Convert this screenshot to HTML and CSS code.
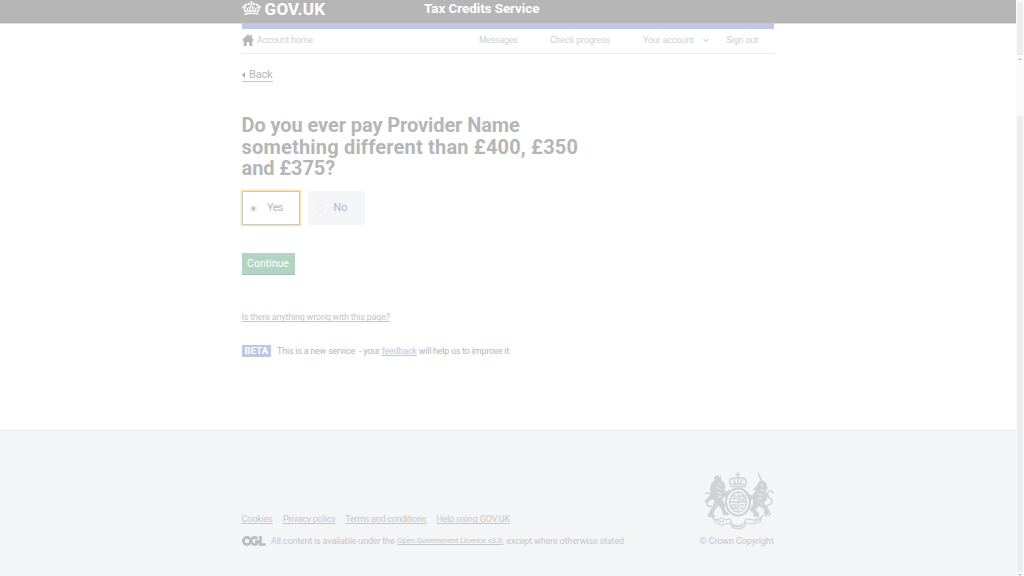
FILE: index.html
```
<!DOCTYPE html>
<html lang="en">
<head>
<meta charset="utf-8">
<title>Tax Credits Service</title>
<link rel="stylesheet" href="styles.css">
</head>
<body>
<div class="viewport">
<div class="page">
<header class="top"><div class="wrap top-in">
<svg class="crown" viewBox="0 0 20 16" fill="none" stroke="#fff"><path d="M2.6 14.1Q10 12 17.4 14.1M3.4 12 1.7 6.8M16.6 12l1.7-5.2M4 11.3Q10 9.6 16 11.3" stroke-width="1.5"/><path d="M2 7.5q2.5-2 3.4 1.1Q7.7 5 9 8.6V5.5h2v3.1q1.3-3.6 3.6 0Q15.5 5.5 18 7.5M6 11 5.3 8.5M8 10.5 7.7 8M12 10.5l.3-2.5M14 11l.7-2.5" stroke-width="1"/><g fill="#fff" stroke="none"><circle cx="1.5" cy="6.3" r="1.4"/><circle cx="4" cy="4.2" r="1.3"/><circle cx="7" cy="3.3" r="1.3"/><circle cx="13" cy="3.3" r="1.3"/><circle cx="16" cy="4.2" r="1.3"/><circle cx="18.5" cy="6.3" r="1.4"/><path d="M9.4 0h1.200l-.2 1.500 1.600-.2v1.400l-1.500-.2.5 2.500H9l.5-2.500-1.500.2V1.300l1.600.2z"/></g></svg>
<span class="gov">GOV.UK</span><span class="service">Tax Credits Service</span>
</div></header>
<main class="wrap">
<div class="blue"></div>
<nav class="nav">
<svg class="home" viewBox="0 0 12 12"><path d="M6 .3 0 6v.5h1.700V12h3V8h2.600v4h3V6.500H12V6L9.900 4V1H8.300v1.500z" fill="#b6b8b9"/></svg>
<span class="n1">Account home</span><span class="n2">Messages</span><span class="n3">Check progress</span><span class="n4">Your account</span>
<svg class="chev" viewBox="0 0 6 5"><path d="m.5 1 2.500 2.500L5.500 1" fill="none" stroke="#b9bbbc" stroke-width="1"/></svg>
<span class="n5">Sign out</span>
</nav>
<a class="back"><i class="tri"></i><span>Back</span></a>
<h1><span class="h1a">Do you ever pay Provider Name</span><span class="h1b">something different than £400, £350</span><span class="h1c">and £375?</span></h1>
<div class="choices"><label class="choice yes"><i class="radio on"></i><span>Yes</span></label><label class="choice no"><i class="radio"></i><span>No</span></label></div>
<button class="continue"><span>Continue</span></button>
<div class="report"><a class="r">Is there anything wrong with this page?</a></div>
<div class="beta"><span class="tag"><b>BETA</b></span><span class="b1">This is a new service &nbsp;- your <a>feedback</a> will help us to improve it.</span></div>
</main>
<footer class="foot"><div class="wrap foot-in">
<div class="meta">
<div class="links"><a class="f1">Cookies</a><a class="f2">Privacy policy</a><a class="f3">Terms and conditions</a><a class="f4">Help using GOV.UK</a></div>
<div class="lic"><svg class="ogl" viewBox="0 0 24 10" fill="none" stroke="#b9bbbd" stroke-width="2.600"><circle cx="5" cy="5" r="3.600"/><path d="M15.500 2.600A3.600 3.600 0 1 0 15.600 7.200V5.400H13M18.500 0V8.500H23.700"/></svg><span class="l1">All content is available under the</span><a class="l2">Open Government Licence v3.0</a><span class="l3">, except where otherwise stated</span></div>
</div>
<div class="copy">
<svg class="arms" viewBox="0 0 70 58" fill="none" stroke="#d0d2d4" stroke-linecap="round" stroke-linejoin="round">
<path d="M34 .8v4M32.300 2.500h3.400" stroke-width="1.400"/>
<path d="M27 14.500 25.500 9q2-4 6-2.500Q33 5 34 5t2.500 1.500q4-1.500 6 2.500L41 14.500zM28 12h12M30 8l1.500 3M38 8l-1.500 3M34 6v5" stroke-width="1.400"/>
<ellipse cx="34" cy="30" rx="12" ry="13.500" stroke-width="2.200" stroke-dasharray="2.500 .8"/>
<ellipse cx="34" cy="30" rx="8.500" ry="10" stroke-width="1.300"/>
<path d="M34 20v20M25.500 30h17M28 24h4m-4 2.500h4M36 24h4v4h-4zM28 33h4v3.500h-4zM36 33h4m-4 3h3" stroke-width="1.300"/>
<g fill="#d0d2d4" stroke-width="1">
<path d="M11 8.500 10.500 4.500l2 1L13.500 3l1.500 2.500 2-1-.5 4 3 2 1.500 4-1 3 2 3 4-2.500 1 1-4 5-4 1-1 4 3 3-1 3 1.500 5 3 1.500-1 1.500-4-.5-2-6-3-3-4 4-2 5 2 1-1 1.500-5-.5.5-3 4-7 2-5-2-3-2 1-4 3-2-1 2-2.500 4-4-.5-6 1-5z"/>
<path d="M50 17l4-4 1-3 4-1 3 2.500 1 5-2 3 2 4-1 5-3 3 4 3 2 5-2 3-3-1 1-4-6-4-4 4 4 5-1 2-4 0v-3l-4-4 3-4 1-6-5-1-3-4 1.500-1 4 2.500 3-3 2-3-3-.5z"/>
</g>
<path d="M58 10 54.500 1.500M7.500 34.500q-6 0-4-5 4-4 3-7-3-3-5-.5M61 34q8-1 7-6-6-4-4-8 3-3 5 1" stroke-width="1.500"/>
<path d="m14 12 3 .5m-4 3 4 2m-4 3 4 1m-3 4 3-1m-5 8 3 2m-3 3-2 4M57 13l2 1m-2 4 3 1m-5 3 3 1m-4 4 4-1m-2 5 3 3" stroke="#f2f3f5" stroke-width=".8"/>
<path d="M8 44q3 6 9 2l5 2 4-1 2 5q6 4 12 0l2-5 9 1 8-4M8 44l3 6 6 3 9-2 2 4q6 3.500 12 0l2-4 8 1 6-2 2-6" stroke-width="1.200"/>
<path d="M13 48.500q3 2 7 .5M50 49.500l6-2" stroke-width="1.500" stroke-dasharray="1 1.800"/>
<path d="M29.500 53.500q4.500 2 9 0" stroke-width="2" stroke-dasharray="1 2.500"/>
<circle cx="65" cy="42" r="1.500" stroke-width="1"/><path d="m60 43 3 1m-2-3 1 1" stroke-width="1"/>
</svg>
<span class="cr">© Crown Copyright</span></div>
</div></footer>
</div>
<aside class="scroll"><i class="s1"></i><i class="up"></i><i class="s2"></i><i class="down"></i></aside>
</div>
</body>
</html>
```
FILE: styles.css
```
* { box-sizing: border-box; }
body { margin: 0; font: 9px/12px Roboto, "Liberation Sans", sans-serif; color: #b5b7b8; background: #fff; overflow: hidden; }
.viewport { display: flex; width: 1024px; height: 576px; overflow: hidden; }
.page { width: 1016px; height: 576px; display: flex; flex-direction: column; }
.wrap { width: 532px; margin-left: 241.6px; }
span, a { white-space: pre; }
.top { height: 23px; background: #b6b6b6; color: #fff; box-shadow: 0 1px #dededf; }
.top-in { display: flex; align-items: flex-start; }
.crown { width: 19px; height: 15px; margin-top: .5px; }
.gov { width: 61px; margin: 0 0 0 4px; font-size: 17px; line-height: 18px; font-weight: 700; letter-spacing: .2px; }
.service { margin-left: 98.5px; font-size: 13.5px; line-height: 16px; font-weight: 700; letter-spacing: -.1px; }
main { height: 407px; display: flex; flex-direction: column; align-items: flex-start; }
.blue { width: 532px; height: 6px; background: #bec7e3; }
.nav { display: flex; align-items: center; width: 532px; height: 25px; padding-bottom: 2px; border-bottom: 1px solid #ececed; color: #cfd1d3; }
.home { width: 12px; height: 12px; margin-right: 3.4px; }
.n1 { width: 222px; letter-spacing: -.2px; }
.n2 { width: 71px; letter-spacing: -.35px; }
.n3 { width: 93px; letter-spacing: -.15px; }
.n4 { width: 60px; letter-spacing: -.2px; }
.n5 { letter-spacing: -.15px; }
.chev { width: 6px; height: 5px; margin-right: 17.5px; }
.back { display: flex; align-items: center; height: 14px; margin-top: 14px; width: 31px; border-bottom: 1px solid #c3c5c6; font-size: 11px; letter-spacing: -.2px; }
.tri { border: solid transparent; border-width: 3px 3.5px 3px 0; border-right-color: #aaacad; margin-right: 4.5px; }
h1 { margin: 33px 0 0; font-size: 20px; line-height: 21.7px; font-weight: 700; color: #b5b6b7; }
h1 span { display: block; }
.h1a { letter-spacing: -.1px; } .h1b { letter-spacing: .18px; } .h1c { letter-spacing: -.1px; }
.choices { display: flex; gap: 8px; margin-top: 11px; }
.choice { display: flex; align-items: center; height: 34px; font-size: 10.8px; background: #f4f5f7; }
.yes { width: 58px; background: #fff; border: 1px solid #c9c9c9; box-shadow: 0 0 0 1.5px #fde7b5; padding-left: 7.5px; letter-spacing: -.6px; }
.no { width: 57px; padding-left: 9px; }
.radio { width: 7px; height: 7px; border: 1px solid #e8e8e8; border-radius: 50%; margin-right: 10px; background: #f6f6f6; }
.on { background: radial-gradient(circle, #bbb 1.3px, #eee 2px); }
.continue { margin: 28px 0 0; width: 53px; height: 22px; padding: 0 0 1px 5.5px; border: 0; box-shadow: inset 0 -1px #9fc4b1; background: #b3d4c3; color: #fff; text-align: left; font: 10.5px/20px Roboto, sans-serif; }
.report { margin-top: 36px; height: 12px; color: #c4c5c6; letter-spacing: -.19px; }
.report a, .links a, .l2 { text-decoration: underline; text-decoration-skip-ink: none; }
.beta { display: flex; height: 12px; margin-top: 22px; letter-spacing: -.235px; }
.tag { width: 29px; height: 12px; padding-left: 3px; margin-right: 6.5px; background: #bec7e3; color: #fff; font-size: 9.5px; letter-spacing: .1px; }
.beta a { color: #b7c9e5; text-decoration: underline; }
.foot { height: 146px; background: #f4f5f7; border-top: 1px solid #e8e9ea; color: #c5c7c9; }
.foot-in { display: flex; justify-content: space-between; }
.meta { padding-top: 82px; }
.links { display: flex; height: 22px; }
.f1 { margin-right: 10.5px; letter-spacing: -.2px; }
.f2 { margin-right: 10px; letter-spacing: -.18px; }
.f3 { margin-right: 10px; letter-spacing: -.29px; }
.f4 { letter-spacing: -.1px; }
.lic { display: flex; align-items: center; height: 12px; }
.ogl { width: 24px; height: 10px; margin-right: 5.5px; }
.l1 { width: 126px; letter-spacing: -.18px; }
.l2 { width: 105.5px; font-size: 8px; letter-spacing: -.2px; }
.l3 { letter-spacing: -.155px; }
.copy { width: 74px; padding-top: 41px; display: flex; flex-direction: column; }
.arms { width: 70px; height: 58px; margin-left: 4px; }
.cr { margin-top: 5px; letter-spacing: -.1px; }
.scroll { width: 8px; height: 576px; background: #fafafa; display: flex; flex-direction: column; align-items: center; }
.s1 { width: 6px; height: 53px; margin-top: 2px; background: #ededed; }
.up { margin-top: 3px; border: solid transparent; border-width: 0 2px 2px; border-bottom-color: #bbb; }
.s2 { width: 6px; height: 456px; margin-top: 56px; background: #ededed; }
.down { margin-top: 2px; border: solid transparent; border-width: 2px 2px 0; border-top-color: #bbb; }
```
